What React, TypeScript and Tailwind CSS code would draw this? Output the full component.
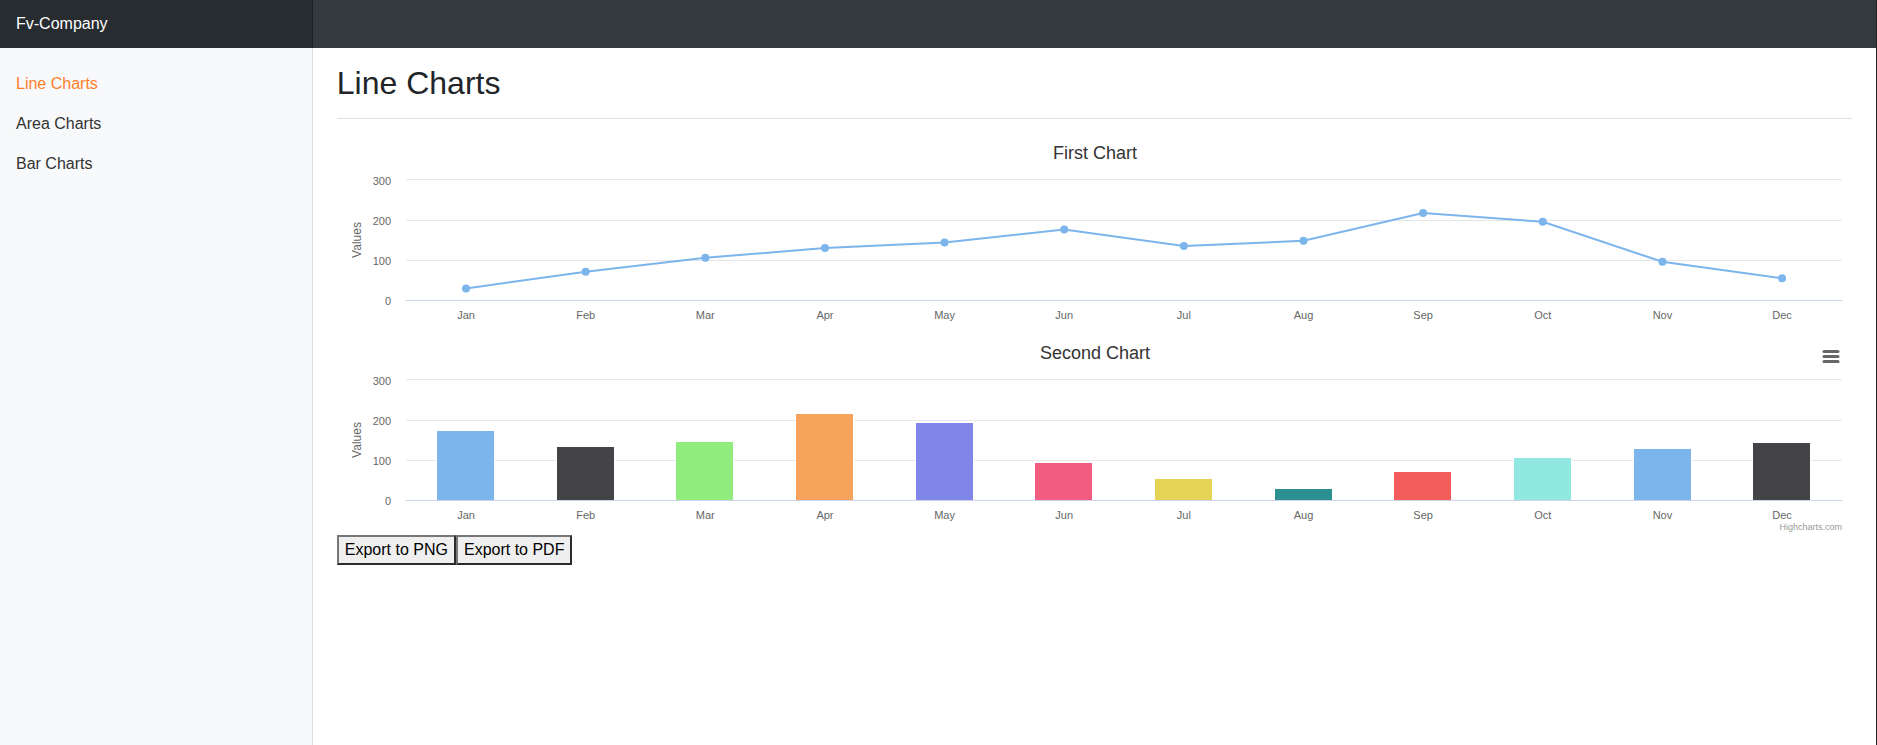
const months = ["Jan","Feb","Mar","Apr","May","Jun","Jul","Aug","Sep","Oct","Nov","Dec"];
const lineValues = [30, 71, 106, 130, 144, 176, 135, 148, 217, 195, 96, 55];
const barLefts = [100, 220, 339, 459, 579, 698, 818, 938, 1057, 1177, 1297, 1416];
const barTops = [101, 117, 112, 84, 93, 133, 149, 159, 142, 128, 119, 113];
const colors = ["#7cb5ec","#434348","#90ed7d","#f7a35c","#8085e9","#f15c80","#e4d354","#2b908f","#f45b5b","#91e8e1","#7cb5ec","#434348"];
const PLOT_LEFT = 69;
const PLOT_RIGHT = 1505;
const SLOT = 119.64;
const TOP = 49.5;
const BOTTOM = 170.5;
const grid = [
  { label: 300, line: 49.5, base: 55 },
  { label: 200, line: 90.5, base: 95 },
  { label: 100, line: 130.5, base: 135 },
];
const yOf = (v: number) => BOTTOM - (v / 300) * (BOTTOM - TOP);
const xOf = (i: number) => 69.2 + SLOT * (i + 0.5);

function Chart({ title, kind }: { title: string; kind: "line" | "bar" }) {
  return (
    <svg width={1515} height={200} className="block overflow-visible" style={{ fontFamily: '"Liberation Sans", sans-serif' }}>
      <text x={758} y={29} textAnchor="middle" fontSize={18} fill="#333333">{title}</text>
      {grid.map((g) => (
        <g key={g.label}>
          <text x={54} y={g.base} textAnchor="end" fontSize={11} fill="#666666">{g.label}</text>
          <line x1={PLOT_LEFT} x2={PLOT_RIGHT} y1={g.line} y2={g.line} stroke="#e6e6e6" />
        </g>
      ))}
      <text x={54} y={175} textAnchor="end" fontSize={11} fill="#666666">0</text>
      <text transform="translate(24,110) rotate(-90)" textAnchor="middle" fontSize={12} fill="#666666">Values</text>
      {months.map((m, i) => (
        <text key={m} x={xOf(i)} y={189} textAnchor="middle" fontSize={11} fill="#666666">{m}</text>
      ))}
      {kind === "line" ? (
        <g>
          <line x1={PLOT_LEFT} x2={PLOT_RIGHT} y1={BOTTOM} y2={BOTTOM} stroke="#ccd6eb" />
          <polyline fill="none" stroke="#7cb5ec" strokeWidth={2} points={lineValues.map((v, i) => `${xOf(i)},${yOf(v)}`).join(" ")} />
          {lineValues.map((v, i) => <circle key={i} cx={xOf(i)} cy={yOf(v)} r={4} fill="#7cb5ec" />)}
        </g>
      ) : (
        <g>
          {barTops.map((t, i) => (
            <rect key={i} x={barLefts[i] - 0.5} y={t - 0.5} width={58} height={171 - t} fill={colors[i]} stroke="#ffffff" strokeWidth={1} />
          ))}
          <line x1={PLOT_LEFT} x2={PLOT_RIGHT} y1={BOTTOM} y2={BOTTOM} stroke="#ccd6eb" />
          <g stroke="#666666" strokeWidth={3} strokeLinecap="round">
            <line x1={1487} x2={1501} y1={21.5} y2={21.5} />
            <line x1={1487} x2={1501} y1={26.5} y2={26.5} />
            <line x1={1487} x2={1501} y1={31.5} y2={31.5} />
          </g>
          <text x={1505} y={200} textAnchor="end" fontSize={9} fill="#999999">Highcharts.com</text>
        </g>
      )}
    </svg>
  );
}

export default function App() {
  return (
    <div className="h-[745px] w-[1877px] overflow-hidden border-r border-[#222222] bg-white font-['Liberation_Sans',sans-serif] text-[16px] leading-6 text-[#212529]">
      <header className="flex h-12 bg-[#343a40]">
        <div className="flex w-[312.8px] items-center border-r border-[#1d2124] bg-[#272c30] pl-4 text-white">Fv-Company</div>
      </header>
      <div className="flex h-[697px]">
        <nav className="flex w-[312.8px] shrink-0 flex-col border-r border-[#dddddd] bg-[#f8f9fa] pt-4">
          <a className="px-4 py-2 text-[#fd7e2a]">Line Charts</a>
          <a className="px-4 py-2 text-[#333333]">Area Charts</a>
          <a className="px-4 py-2 text-[#333333]">Bar Charts</a>
        </nav>
        <main className="flex-1 px-6 pt-4">
          <h1 className="border-b border-[#dee2e6] pb-4 text-[32px] font-normal leading-[38px] text-[#212529]">Line Charts</h1>
          <div className="mt-[11px]">
            <Chart title="First Chart" kind="line" />
            <Chart title="Second Chart" kind="bar" />
          </div>
          <div className="mt-[5px] flex">
            <button className="border-2 border-t-[#767676] border-l-[#767676] border-r-[#2b2b2b] border-b-[#2b2b2b] bg-[#efefef] px-1.5 py-px text-black">Export to PNG</button>
            <button className="border-2 border-t-[#767676] border-l-[#767676] border-r-[#2b2b2b] border-b-[#2b2b2b] bg-[#efefef] px-1.5 py-px text-black">Export to PDF</button>
          </div>
        </main>
      </div>
    </div>
  );
}
